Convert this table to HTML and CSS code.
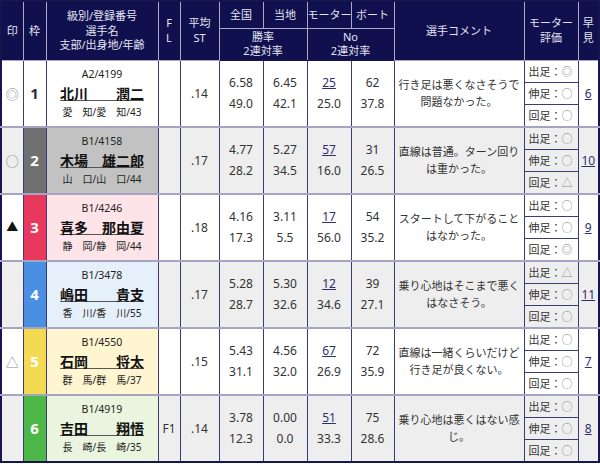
FILE: index.html
```html
<!DOCTYPE html>
<html lang="ja">
<head>
<meta charset="utf-8">
<title>出走表</title>
<link rel="stylesheet" href="styles.css">
</head>
<body>
<table class="race">
  <colgroup>
    <col class="c-mark"><col class="c-waku"><col class="c-name"><col class="c-fl"><col class="c-st">
    <col class="c-num"><col class="c-num"><col class="c-num"><col class="c-num3">
    <col class="c-cmt"><col class="c-eval"><col class="c-hay">
  </colgroup>
  <thead>
    <tr class="h1">
      <th rowspan="2">印</th>
      <th rowspan="2">枠</th>
      <th rowspan="2">級別/登録番号<br>選手名<br>支部/出身地/年齢</th>
      <th rowspan="2">F<br>L</th>
      <th rowspan="2">平均<br>ST</th>
      <th>全国</th>
      <th>当地</th>
      <th>モーター</th>
      <th>ボート</th>
      <th rowspan="2">選手コメント</th>
      <th rowspan="2">モーター<br>評価</th>
      <th rowspan="2">早<br>見</th>
    </tr>
    <tr class="h2">
      <th colspan="2">勝率<br>2連対率</th>
      <th colspan="2">No<br>2連対率</th>
    </tr>
  </thead>
  <tbody>
    <tr class="odd">
      <td class="mark">◎</td>
      <td class="waku w1">1</td>
      <td class="name n1"><div class="reg">A2/4199</div><a class="nm">北川　　潤二</a><div class="pref">愛　知/愛　知/43</div></td>
      <td class="fl"></td>
      <td class="st">.14</td>
      <td class="num">6.58<br>49.0</td>
      <td class="num">6.45<br>42.1</td>
      <td class="num"><a class="lnk">25</a><br>25.0</td>
      <td class="num">62<br>37.8</td>
      <td class="cmt">行き足は悪くなさそうで問題なかった。</td>
      <td class="eval"><div class="ev">出足：<span class="sym">◎</span></div><div class="ev">伸足：<span class="sym">○</span></div><div class="ev">回足：<span class="sym">○</span></div></td>
      <td class="hay"><a class="lnk">6</a></td>
    </tr>
    <tr class="even">
      <td class="mark">○</td>
      <td class="waku w2">2</td>
      <td class="name n2"><div class="reg">B1/4158</div><a class="nm">木場　雄二郎</a><div class="pref">山　口/山　口/44</div></td>
      <td class="fl"></td>
      <td class="st">.17</td>
      <td class="num">4.77<br>28.2</td>
      <td class="num">5.27<br>34.5</td>
      <td class="num"><a class="lnk">57</a><br>16.0</td>
      <td class="num">31<br>26.5</td>
      <td class="cmt">直線は普通。ターン回りは重かった。</td>
      <td class="eval"><div class="ev">出足：<span class="sym">○</span></div><div class="ev">伸足：<span class="sym">○</span></div><div class="ev">回足：<span class="sym">△</span></div></td>
      <td class="hay"><a class="lnk">10</a></td>
    </tr>
    <tr class="odd">
      <td class="mark dark">▲</td>
      <td class="waku w3">3</td>
      <td class="name n3"><div class="reg">B1/4246</div><a class="nm">喜多　那由夏</a><div class="pref">静　岡/静　岡/44</div></td>
      <td class="fl"></td>
      <td class="st">.18</td>
      <td class="num">4.16<br>17.3</td>
      <td class="num">3.11<br>5.5</td>
      <td class="num"><a class="lnk">17</a><br>56.0</td>
      <td class="num">54<br>35.2</td>
      <td class="cmt">スタートして下がることはなかった。</td>
      <td class="eval"><div class="ev">出足：<span class="sym">○</span></div><div class="ev">伸足：<span class="sym">○</span></div><div class="ev">回足：<span class="sym">◎</span></div></td>
      <td class="hay"><a class="lnk">9</a></td>
    </tr>
    <tr class="even">
      <td class="mark"></td>
      <td class="waku w4">4</td>
      <td class="name n4"><div class="reg">B1/3478</div><a class="nm">嶋田　　貴支</a><div class="pref">香　川/香　川/55</div></td>
      <td class="fl"></td>
      <td class="st">.17</td>
      <td class="num">5.28<br>28.7</td>
      <td class="num">5.30<br>32.6</td>
      <td class="num"><a class="lnk">12</a><br>34.6</td>
      <td class="num">39<br>27.1</td>
      <td class="cmt">乗り心地はそこまで悪くはなさそう。</td>
      <td class="eval"><div class="ev">出足：<span class="sym">△</span></div><div class="ev">伸足：<span class="sym">○</span></div><div class="ev">回足：<span class="sym">○</span></div></td>
      <td class="hay"><a class="lnk">11</a></td>
    </tr>
    <tr class="odd">
      <td class="mark">△</td>
      <td class="waku w5">5</td>
      <td class="name n5"><div class="reg">B1/4550</div><a class="nm">石岡　　将太</a><div class="pref">群　馬/群　馬/37</div></td>
      <td class="fl"></td>
      <td class="st">.15</td>
      <td class="num">5.43<br>31.1</td>
      <td class="num">4.56<br>32.0</td>
      <td class="num"><a class="lnk">67</a><br>26.9</td>
      <td class="num">72<br>35.9</td>
      <td class="cmt">直線は一緒くらいだけど行き足が良くない。</td>
      <td class="eval"><div class="ev">出足：<span class="sym">○</span></div><div class="ev">伸足：<span class="sym">○</span></div><div class="ev">回足：<span class="sym">○</span></div></td>
      <td class="hay"><a class="lnk">7</a></td>
    </tr>
    <tr class="even">
      <td class="mark"></td>
      <td class="waku w6">6</td>
      <td class="name n6"><div class="reg">B1/4919</div><a class="nm">吉田　　翔悟</a><div class="pref">長　崎/長　崎/35</div></td>
      <td class="fl">F1</td>
      <td class="st">.14</td>
      <td class="num">3.78<br>12.3</td>
      <td class="num">0.00<br>0.0</td>
      <td class="num"><a class="lnk">51</a><br>33.3</td>
      <td class="num">75<br>28.6</td>
      <td class="cmt">乗り心地は悪くはない感じ。</td>
      <td class="eval"><div class="ev">出足：<span class="sym">○</span></div><div class="ev">伸足：<span class="sym">○</span></div><div class="ev">回足：<span class="sym">○</span></div></td>
      <td class="hay"><a class="lnk">8</a></td>
    </tr>
  </tbody>
</table>
</body>
</html>
```

FILE: styles.css
```css
html, body {
  margin: 0;
  padding: 0;
  background: #ffffff;
}
body {
  font-family: "Noto Sans", "Noto Sans CJK JP", sans-serif;
  color: #333333;
}
.race {
  width: 600px;
  border-collapse: collapse;
  table-layout: fixed;
  border: 2px solid #16164f;
}
.c-mark { width: 22px; }
.c-waku { width: 23px; }
.c-name { width: 112px; }
.c-fl { width: 22px; }
.c-st { width: 39px; }
.c-num { width: 44px; }
.c-num3 { width: 43px; }
.c-cmt { width: 130px; }
.c-eval { width: 54px; }
.c-hay { width: 21px; }

.race th {
  background: #10104f;
  color: #e4e4f0;
  font-weight: normal;
  font-size: 11px;
  line-height: 14.5px;
  border: 1px solid #a9a9c6;
  padding: 0;
  white-space: nowrap;
  text-align: center;
}
.race thead tr.h1 th { border-top: 0; }
.race tr.h1 { height: 27px; }
.race tr.h2 { height: 32px; }
.race tr.h2 th { border-bottom: 1px solid #16164f; }

.race td {
  border-left: 1px solid #3b3b75;
  border-right: 1px solid #3b3b75;
  border-bottom: 2px solid #a5a5c3;
  padding: 0;
  text-align: center;
  vertical-align: middle;
}
.race tbody tr:last-child td { border-bottom: 2px solid #16164f; }
tr.even td { background: #eeeeee; }

.mark { font-size: 13px; color: #8a8a8a; }
.mark.dark { color: #111111; font-size: 12px; }

.waku { font-size: 15px; font-weight: bold; color: #ffffff; }
.race tr td.w1 { background: #ffffff; color: #2b2b40; }
.race tr td.w2 { background: #707070; }
.race tr td.w3 { background: #e8385e; }
.race tr td.w4 { background: #4a8fe2; }
.race tr td.w5 { background: #f4da52; }
.race tr td.w6 { background: #4db748; }

.race tr td.n1 { background: #ffffff; }
.race tr td.n2 { background: #c2c2c2; }
.race tr td.n3 { background: #fde4e9; }
.race tr td.n4 { background: #e6f0fa; }
.race tr td.n5 { background: #fff5d1; }
.race tr td.n6 { background: #e9f5de; }

.name { color: #222222; }
.reg { font-size: 10.5px; line-height: 15px; }
.nm {
  display: inline-block;
  font-size: 14px;
  font-weight: bold;
  line-height: 18px;
  color: #111111;
  text-decoration: underline;
  text-decoration-color: #555555;
  text-underline-offset: 1px;
}
.pref { font-size: 10px; line-height: 16px; }

.fl, .st { font-size: 12px; }
.num { font-size: 12px; line-height: 21px; }
.lnk { color: #2e2e6e; text-decoration: underline; }

.cmt {
  text-align: left;
  font-size: 11px;
  line-height: 17px;
  padding: 0 2px 0 5px;
}
.race td.eval { padding: 0; vertical-align: top; }
.ev {
  height: 21px;
  line-height: 21px;
  font-size: 11px;
  text-align: left;
  padding-left: 4px;
  border-bottom: 1px solid #3b3b75;
  color: #333333;
  white-space: nowrap;
}
.ev:last-child { border-bottom: 0; }
.sym { color: #8a8a8a; }
.hay { font-size: 12px; }
```
